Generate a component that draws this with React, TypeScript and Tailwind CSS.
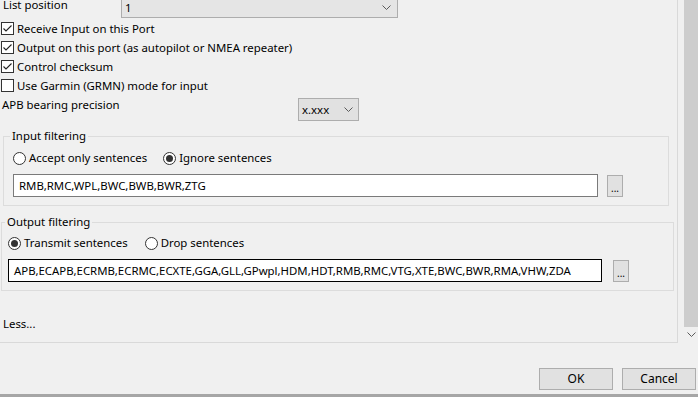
import React from 'react'

const CHECKS = [
  { label: 'Receive Input on this Port', checked: true },
  { label: 'Output on this port (as autopilot or NMEA repeater)', checked: true },
  { label: 'Control checksum', checked: true },
  { label: 'Use Garmin (GRMN) mode for input', checked: false },
]

function Chevron() {
  return (
    <svg width="9" height="5" viewBox="0 0 9 5" className="shrink-0">
      <path d="M0.5 0.5 L4.5 4.5 L8.5 0.5" fill="none" stroke="#5a5a5a" strokeWidth="1" />
    </svg>
  )
}

function CheckBox({ checked }: { checked: boolean }) {
  return (
    <div className="w-[13px] h-[13px] border border-[#333333] bg-white flex items-center justify-center shrink-0">
      {checked && (
        <svg width="11" height="11" viewBox="0 0 11 11">
          <path d="M1.5 5.5 L4 8 L9.5 2.5" fill="none" stroke="#222" strokeWidth="1.1" />
        </svg>
      )}
    </div>
  )
}

function Radio({ on, label }: { on: boolean; label: string }) {
  return (
    <div className="flex items-center">
      <div className="w-[13px] h-[13px] rounded-full border border-[#333333] bg-white flex items-center justify-center shrink-0">
        {on && <div className="w-[7px] h-[7px] rounded-full bg-[#333333]" />}
      </div>
      <span className="ml-[3px] leading-[16px]">{label}</span>
    </div>
  )
}

function DotsButton() {
  return (
    <div className="w-[16px] h-[22px] border border-[#adadad] bg-[#e1e1e1] flex items-end justify-center pb-[3px] shrink-0">
      <span className="text-[10px] leading-[10px]">...</span>
    </div>
  )
}

export default function App() {
  return (
    <div className="w-[698px] h-[397px] bg-[#f0f0f0] overflow-hidden flex flex-col text-[11.4px] text-black font-['Noto_Sans',sans-serif]">
      <div className="flex h-[343px] shrink-0">
        {/* Scrolled settings panel */}
        <div className="w-[678px] h-[343px] border-r border-b border-[#d9d9d9] overflow-hidden">
          <div className="-mt-[4px] flex flex-col">
            {/* List position */}
            <div className="flex items-start h-[22px]">
              <span className="pl-[3px] pt-[1px] leading-[16px] w-[121px]">List position</span>
              <div className="w-[277px] h-[22px] border border-[#adadad] bg-[#e5e5e5] flex items-center justify-between pl-[3px] pr-[6px]">
                <span className="leading-[16px] pt-[2px]">1</span>
                <Chevron />
              </div>
            </div>

            {/* Checkboxes */}
            <div className="flex flex-col mt-[1px]">
              {CHECKS.map((c) => (
                <div key={c.label} className="flex items-center h-[19px] pl-[1px]">
                  <CheckBox checked={c.checked} />
                  <span className="ml-[3px] leading-[16px]">{c.label}</span>
                </div>
              ))}
            </div>

            {/* APB bearing precision */}
            <div className="flex items-start h-[26px]">
              <span className="pl-[2px] pt-[2px] leading-[16px] w-[298px]">APB bearing precision</span>
              <div className="mt-[3px] w-[61px] h-[23px] border border-[#adadad] bg-[#e1e1e1] flex items-center justify-between pl-[3px] pr-[5px]">
                <span className="leading-[16px]">x.xxx</span>
                <Chevron />
              </div>
            </div>

            {/* Input filtering */}
            <fieldset className="ml-[3px] w-[666px] mt-[7px] border border-[#dcdcdc] pb-[8px]">
              <legend className="ml-[6px] px-[2px] leading-[16px]">Input filtering</legend>
              <div className="pl-[9px]">
                <div className="flex items-center gap-[16px] mt-[6px]">
                  <Radio on={false} label="Accept only sentences" />
                  <Radio on label="Ignore sentences" />
                </div>
                <div className="flex items-center mt-[8px]">
                  <div className="w-[585px] h-[23px] border border-[#7a7a7a] bg-white flex items-center pl-[5px]">
                    <span className="leading-[16px]">RMB,RMC,WPL,BWC,BWB,BWR,ZTG</span>
                  </div>
                  <div className="ml-[9px]">
                    <DotsButton />
                  </div>
                </div>
              </div>
            </fieldset>

            {/* Output filtering */}
            <fieldset className="ml-[1px] w-[673px] mt-[8px] border border-[#dcdcdc] pb-[8px]">
              <legend className="ml-[3px] px-[2px] leading-[16px]">Output filtering</legend>
              <div className="pl-[6px]">
                <div className="flex items-center gap-[17px] mt-[5px]">
                  <Radio on label="Transmit sentences" />
                  <Radio on={false} label="Drop sentences" />
                </div>
                <div className="flex items-center mt-[8px]">
                  <div className="w-[594px] h-[23px] border border-black bg-white flex items-center pl-[5px]">
                    <span className="leading-[16px]">APB,ECAPB,ECRMB,ECRMC,ECXTE,GGA,GLL,GPwpl,HDM,HDT,RMB,RMC,VTG,XTE,BWC,BWR,RMA,VHW,ZDA</span>
                  </div>
                  <div className="ml-[11px]">
                    <DotsButton />
                  </div>
                </div>
              </div>
            </fieldset>

            {/* Less... */}
            <span className="pl-[3px] mt-[25px] leading-[16px]">Less...</span>
          </div>
        </div>

        {/* Scrollbar */}
        <div className="ml-[6px] w-[14px] flex flex-col">
          <div className="h-[340px] bg-[#cdcdcd]" />
          <div className="h-[17px] flex items-center justify-center">
            <Chevron />
          </div>
        </div>
      </div>

      {/* Dialog buttons */}
      <div className="flex justify-end gap-[9px] pr-[2px] pt-[25px]">
        <div className="w-[74px] h-[22px] border border-[#adadad] bg-[#e1e1e1] flex items-center justify-center">
          <span className="leading-[16px] text-[12px]">OK</span>
        </div>
        <div className="w-[74px] h-[22px] border border-[#adadad] bg-[#e1e1e1] flex items-center justify-center">
          <span className="leading-[16px] text-[12px]">Cancel</span>
        </div>
      </div>

      <div className="mt-auto h-[3px] bg-[#a6a6a6]" />
    </div>
  )
}
